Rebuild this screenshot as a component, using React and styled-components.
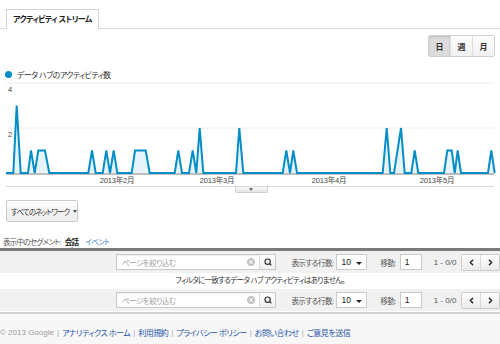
import React from "react";
import styled, { createGlobalStyle } from "styled-components";
import { ChevronLeft, ChevronRight, Search, X } from "lucide-react";

const GlobalStyle = createGlobalStyle`
  html, body {
    margin: 0;
    padding: 0;
    background: #fff;
  }
  body {
    width: 500px;
    height: 344px;
    overflow: hidden;
    font-family: "Liberation Sans", "Noto Sans CJK JP", sans-serif;
    font-feature-settings: "palt" 1;
    color: #333;
  }
`;

// グラフの頂点 (x ピクセル, 値)
const POINTS = [
  [6, 0], [13.3, 0], [16.7, 3], [20.7, 0], [28, 0], [31, 1], [34.7, 0],
  [38.3, 1], [45, 1], [49.3, 0], [88.3, 0], [92, 1], [95.7, 0], [102.7, 0],
  [106.3, 1], [110, 0], [113.7, 1], [117.3, 0], [131.7, 0], [135, 1],
  [145.7, 1], [149.7, 0], [174.7, 0], [178.3, 1], [182, 0], [189, 0],
  [192.7, 1], [196.3, 0], [199.7, 2], [203.3, 0], [236, 0], [239.3, 2],
  [243.3, 0], [282.7, 0], [286.3, 1], [290, 0], [293.3, 1], [297, 0],
  [382.7, 0], [386.7, 2], [390.3, 0], [394, 0], [401, 2], [404.7, 0],
  [411.3, 0], [414.7, 1], [418.3, 0], [444, 0], [447.3, 1], [451.7, 1],
  [454.7, 0], [457.7, 1], [461, 0], [488, 0], [491.3, 1], [494.7, 0],
];

const MONTHS = [
  ["2013年2月", 117],
  ["2013年3月", 217],
  ["2013年4月", 329],
  ["2013年5月", 437],
];

const Y0 = 94;
const STEP = 22.5;
const toY = (v) => Y0 - v * STEP;

const linePath = POINTS.map(
  ([x, v], i) => `${i ? "L" : "M"}${x} ${toY(v)}`
).join(" ");
const areaPath = `${linePath} L${POINTS[POINTS.length - 1][0]} ${Y0} L6 ${Y0} Z`;

const FOOTER_LINKS = [
  "アナリティクス ホーム",
  "利用規約",
  "プライバシー ポリシー",
  "お問い合わせ",
  "ご意見を送信",
];

function FilterRow() {
  return (
    <FilterBar>
      <SearchBox>
        <SearchText>ページを絞り込む</SearchText>
        <ClearIcon>
          <X size={6} strokeWidth={4} color='#fff' />
        </ClearIcon>
        <SearchButton>
          <Search size={8} strokeWidth={3.5} color='#333' />
        </SearchButton>
      </SearchBox>
      <BarLabel $gap={15} $tight>表示する行数:</BarLabel>
      <Select>
        10
        <Caret />
      </Select>
      <BarLabel $gap={13} $tight>移動:</BarLabel>
      <PageInput>1</PageInput>
      <BarLabel $gap={12}>1 - 0/0</BarLabel>
      <Pager>
        <PagerButton>
          <ChevronLeft size={9} strokeWidth={4} color='#222' />
        </PagerButton>
        <PagerButton $divider>
          <ChevronRight size={9} strokeWidth={4} color='#222' />
        </PagerButton>
      </Pager>
    </FilterBar>
  );
}

export default function App() {
  return (
    <Page>
      <GlobalStyle />
      <TabStrip>
        <Tab>アクティビティ ストリーム</Tab>
      </TabStrip>

      <Toolbar>
        <RangeGroup>
          <RangeButton $active>日</RangeButton>
          <RangeButton $divider>週</RangeButton>
          <RangeButton $divider>月</RangeButton>
        </RangeGroup>
      </Toolbar>

      <Legend>
        <Dot />
        データ ハブのアクティビティ数
      </Legend>

      <ChartSvg width='500' height='107' viewBox='0 0 500 107'>
        <line x1='6' x2='494' y1={toY(4)} y2={toY(4)} className='grid' />
        <line x1='6' x2='494' y1={toY(2)} y2={toY(2)} className='grid' />
        <line x1='6' x2='494' y1={Y0 + 1} y2={Y0 + 1} className='axis' />
        <text x='8' y='12.5'>4</text>
        <text x='8' y='57.5'>2</text>
        <path d={areaPath} className='area' />
        <path d={linePath} className='line' />
        {MONTHS.map(([label, x]) => (
          <text key={label} x={x} y='103.5' textAnchor='middle'>
            {label}
          </text>
        ))}
      </ChartSvg>
      <AxisRule />
      <HandleRow>
        <Handle />
      </HandleRow>

      <NetworkButton>
        すべてのネットワーク
        <SmallCaret />
      </NetworkButton>

      <SegmentRow>
        <SegmentLabel>表示中のセグメント:</SegmentLabel>
        <SegmentTab $active>会話</SegmentTab>
        <SegmentTab>イベント</SegmentTab>
      </SegmentRow>
      <SegmentRule />

      <FilterRow />
      <Message>フィルタに一致するデータ ハブ アクティビティはありません。</Message>
      <FilterRow />

      <Footer>
        <span>© 2013 Google</span>
        {FOOTER_LINKS.map((l) => (
          <React.Fragment key={l}>
            <Sep>|</Sep>
            <FooterLink>{l}</FooterLink>
          </React.Fragment>
        ))}
      </Footer>
    </Page>
  );
}

const Page = styled.div`
  width: 500px;
  height: 344px;
  display: flex;
  flex-direction: column;
  overflow: hidden;
`;

const TabStrip = styled.div`
  display: flex;
  padding: 9px 0 0 6px;
  border-bottom: 1px solid #dcdcdc;
`;

const Tab = styled.div`
  height: 19px;
  line-height: 19px;
  padding: 0 6px;
  margin-bottom: -1px;
  border: 1px solid #d4d4d4;
  border-bottom: none;
  background: #fff;
  font-size: 8px;
  font-weight: bold;
  letter-spacing: -0.6px;
  color: #222;
`;

const Toolbar = styled.div`
  display: flex;
  justify-content: flex-end;
  padding: 6px 5px 0 0;
`;

const RangeGroup = styled.div`
  display: flex;
  border: 1px solid #d2d2d2;
  border-radius: 2px;
  overflow: hidden;
`;

const RangeButton = styled.div`
  width: 21px;
  height: 20px;
  display: flex;
  align-items: center;
  justify-content: center;
  font-size: 8px;
  font-weight: bold;
  color: #333;
  border-left: ${(p) => (p.$divider ? "1px solid #dedede" : "none")};
  background: ${(p) =>
    p.$active ? "#dcdcdc" : "linear-gradient(#fdfdfd, #f1f1f1)"};
  box-shadow: ${(p) => (p.$active ? "inset 0 1px 2px rgba(0,0,0,0.15)" : "none")};
`;

const Legend = styled.div`
  display: flex;
  align-items: center;
  gap: 5px;
  height: 10px;
  margin: 12px 0 0 5px;
  font-size: 8px;
  letter-spacing: -0.6px;
  color: #333;
`;

const Dot = styled.span`
  width: 7px;
  height: 7px;
  border-radius: 50%;
  background: #058dc7;
`;

const ChartSvg = styled.svg`
  display: block;

  .grid {
    stroke: #ececec;
    stroke-width: 1;
  }
  .axis {
    stroke: #a8a8a8;
    stroke-width: 1.5;
  }
  .area {
    fill: rgba(5, 141, 199, 0.1);
  }
  .line {
    fill: none;
    stroke: #058dc7;
    stroke-width: 2;
  }
  text {
    font-size: 7.5px;
    letter-spacing: -0.2px;
    fill: #444;
  }
`;

const AxisRule = styled.div`
  margin: 0 6px;
  border-top: 1px solid #dadada;
`;

const HandleRow = styled.div`
  display: flex;
  justify-content: center;
`;

const Handle = styled.div`
  position: relative;
  width: 31px;
  height: 5px;
  margin-left: 2px;
  border: 1px solid #cfcfcf;
  border-top: none;
  border-radius: 0 0 2px 2px;
  background: linear-gradient(#f6f6f6, #e6e6e6);

  &::after {
    content: "";
    position: absolute;
    left: 13px;
    top: 1px;
    border-left: 2.5px solid transparent;
    border-right: 2.5px solid transparent;
    border-top: 3px solid #666;
  }
`;

const NetworkButton = styled.div`
  align-self: flex-start;
  box-sizing: border-box;
  width: 72px;
  height: 22px;
  margin: 7px 0 0 6px;
  padding: 0 4px;
  display: flex;
  align-items: center;
  gap: 4px;
  border: 1px solid #cacaca;
  border-radius: 2px;
  background: linear-gradient(#fcfcfc, #ededed);
  font-size: 7.5px;
  letter-spacing: -0.9px;
  color: #333;
  white-space: nowrap;
`;

const SmallCaret = styled.span`
  border-left: 2.5px solid transparent;
  border-right: 2.5px solid transparent;
  border-top: 3px solid #555;
`;

const SegmentRow = styled.div`
  display: flex;
  align-items: center;
  height: 12px;
  margin: 13px 0 0 3px;
  font-size: 7.5px;
  letter-spacing: -0.7px;
`;

const SegmentLabel = styled.span`
  color: #555;
`;

const SegmentTab = styled.span`
  position: relative;
  margin-left: ${(p) => (p.$active ? 4 : 7)}px;
  font-weight: ${(p) => (p.$active ? "bold" : "normal")};
  color: ${(p) => (p.$active ? "#222" : "#3b7bc4")};

  &::after {
    content: "";
    display: ${(p) => (p.$active ? "block" : "none")};
    position: absolute;
    left: 50%;
    bottom: -3px;
    margin-left: -3px;
    border-left: 3px solid transparent;
    border-right: 3px solid transparent;
    border-bottom: 3px solid #777;
  }
`;

const SegmentRule = styled.div`
  height: 3px;
  margin-top: 1px;
  background: #7a7a7a;
`;

const FilterBar = styled.div`
  display: flex;
  align-items: center;
  height: 22px;
  padding-left: 116px;
  background: #f1f1f1;
`;

const SearchBox = styled.div`
  box-sizing: border-box;
  width: 162px;
  height: 16px;
  display: flex;
  align-items: center;
  border: 1px solid #c9c9c9;
  background: #fff;
  box-shadow: inset 0 1px 1px rgba(0, 0, 0, 0.06);
`;

const SearchText = styled.span`
  flex: 1;
  padding-left: 5px;
  font-size: 7.5px;
  letter-spacing: -0.5px;
  color: #a0a0a0;
`;

const ClearIcon = styled.span`
  width: 8px;
  height: 8px;
  margin-right: 4px;
  border-radius: 50%;
  background: #c4c4c4;
  display: flex;
  align-items: center;
  justify-content: center;
`;

const SearchButton = styled.span`
  width: 15px;
  height: 100%;
  display: flex;
  align-items: center;
  justify-content: center;
  border-left: 1px solid #dadada;
  background: linear-gradient(#fdfdfd, #efefef);
`;

const BarLabel = styled.span`
  margin-left: ${(p) => p.$gap}px;
  font-size: ${(p) => (p.$tight ? 7.5 : 8)}px;
  letter-spacing: ${(p) => (p.$tight ? -0.5 : 0)}px;
  color: #555;
  white-space: nowrap;
`;

const Select = styled.div`
  box-sizing: border-box;
  width: 31px;
  height: 16px;
  margin-left: 3px;
  padding: 0 4px 0 4px;
  display: flex;
  align-items: center;
  justify-content: space-between;
  border: 1px solid #cbcbcb;
  background: #fff;
  font-size: 8.5px;
  color: #222;
`;

const Caret = styled.span`
  margin-top: 2px;
  border-left: 3px solid transparent;
  border-right: 3px solid transparent;
  border-top: 3px solid #222;
`;

const PageInput = styled.div`
  box-sizing: border-box;
  width: 22px;
  height: 16px;
  margin-left: 4px;
  padding-left: 4px;
  display: flex;
  align-items: center;
  border: 1px solid #cbcbcb;
  background: #fff;
  font-size: 8.5px;
  color: #222;
`;

const Pager = styled.div`
  display: flex;
  margin-left: 5px;
  border: 1px solid #cacaca;
  border-radius: 2px;
  overflow: hidden;
`;

const PagerButton = styled.div`
  width: 18px;
  height: 15px;
  display: flex;
  align-items: center;
  justify-content: center;
  border-left: ${(p) => (p.$divider ? "1px solid #d8d8d8" : "none")};
  background: linear-gradient(#fdfdfd, #ececec);
`;

const Message = styled.div`
  height: 16px;
  line-height: 16px;
  padding-left: 20px;
  text-align: center;
  font-size: 7.5px;
  letter-spacing: -0.7px;
  color: #333;
`;

const Footer = styled.div`
  flex: 1;
  display: flex;
  align-items: center;
  margin-top: 1px;
  padding-top: 6px;
  border-top: 2px solid #d2d2d2;
  background: #f7f7f7;
  font-size: 8px;
  color: #9a9a9a;
  white-space: nowrap;
`;

const Sep = styled.span`
  margin: 0 3px;
  color: #a8a8a8;
`;

const FooterLink = styled.span`
  letter-spacing: -0.5px;
  color: #1f55a8;
`;
